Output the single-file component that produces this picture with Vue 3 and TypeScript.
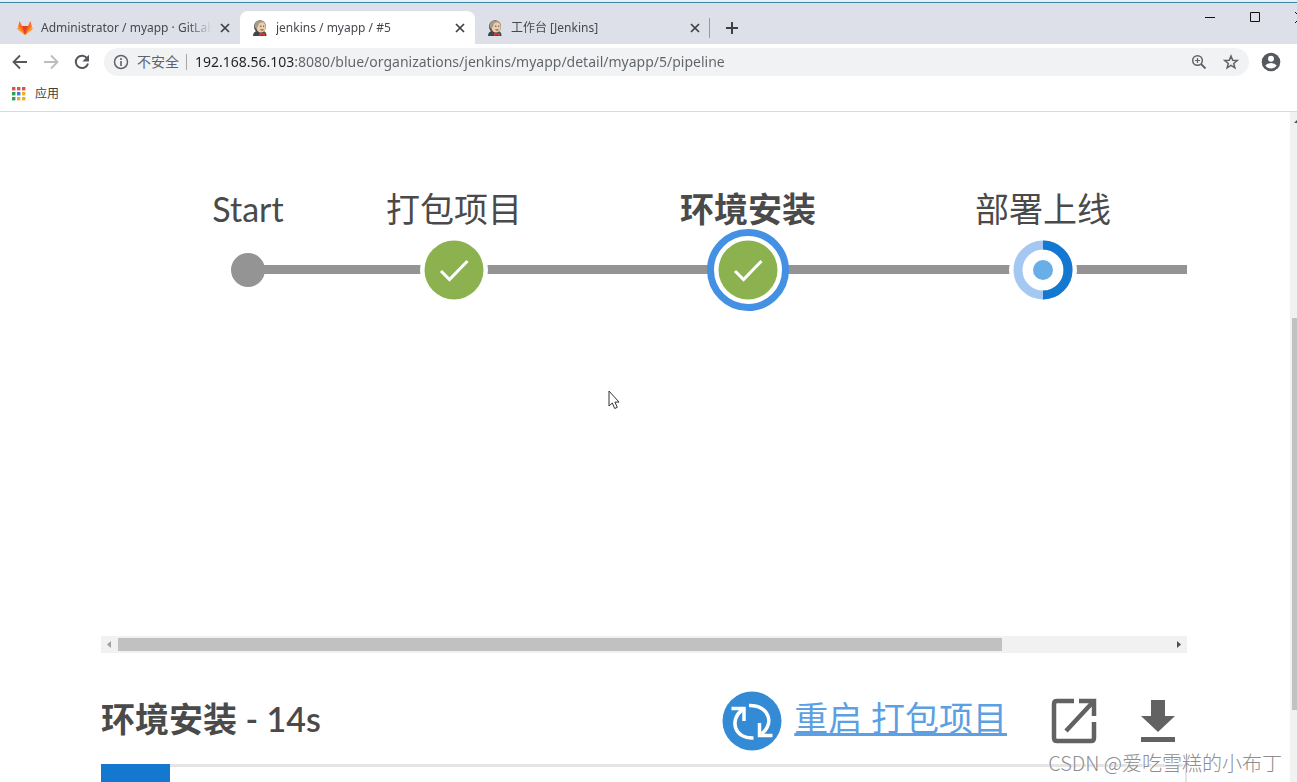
<script setup lang="ts">
import { ref } from 'vue'

interface BrowserTab {
  id: number
  title: string
  icon: 'gitlab' | 'jenkins'
}

interface Stage {
  name: string
  x: number
  state: 'start' | 'success' | 'running'
}

const tabs: BrowserTab[] = [
  { id: 1, title: 'Administrator / myapp · GitLab', icon: 'gitlab' },
  { id: 2, title: 'jenkins / myapp / #5', icon: 'jenkins' },
  { id: 3, title: '工作台 [Jenkins]', icon: 'jenkins' },
]
const activeTab = ref(2)

const address = ref('192.168.56.103:8080/blue/organizations/jenkins/myapp/detail/myapp/5/pipeline')

const stages: Stage[] = [
  { name: 'Start', x: 147, state: 'start' },
  { name: '打包项目', x: 353, state: 'success' },
  { name: '环境安装', x: 647, state: 'success' },
  { name: '部署上线', x: 942, state: 'running' },
]
const selected = ref('环境安装')

const appColors = ['#d9534a', '#d9534a', '#d9534a', '#2e9e5b', '#3b7de0', '#e8b02c', '#2e9e5b', '#e8b02c', '#e8b02c']
</script>

<template>
  <div class="window">
    <header class="chrome">
      <div class="frame-edge"></div>
      <div class="tab-strip">
        <div class="tabs" role="tablist">
          <div v-for="tab in tabs" :key="tab.id" class="tab" :class="{ active: tab.id === activeTab }">
            <button class="tab-main" role="tab" :aria-selected="tab.id === activeTab" @click="activeTab = tab.id">
              <svg v-if="tab.icon === 'gitlab'" class="favicon" viewBox="0 0 16 16" aria-hidden="true">
                <path d="M8 15 .5 9 2.600 1 5 6h6L13.400 1 15.500 9z" fill="#fc6d26" />
                <path d="M8 15 5 6h6z" fill="#e24329" />
                <path d="M8 15 .5 9l.8-3zM8 15l7.500-6-.8-3z" fill="#fca326" />
              </svg>
              <svg v-else class="favicon" viewBox="0 0 16 16" aria-hidden="true">
                <path d="M1 16c0-3 1.500-4.500 4-5h6c2.500.5 3.500 2 3.500 5z" fill="#3c4650" />
                <ellipse cx="8" cy="6.500" rx="6" ry="6.300" fill="#4a4542" />
                <ellipse cx="9" cy="6.800" rx="4.800" ry="5.800" fill="#edcdaa" />
                <path d="M2.500 6.500C2.500 2.500 5 .8 8 .8c3 0 4 1.200 4.500 2.200C10 2 7 2.500 6.500 5 6 7 5 8 4 9z" fill="#a79b8c" />
                <path d="M8 6.200h1.500M11 6.200h1.200M8.500 9.700q1.500.8 3 0" stroke="#59473c" fill="none" />
                <path d="m7 12.500 3 1 3-1V16l-3-1-3 1z" fill="#d33833" />
              </svg>
              <span class="tab-title">{{ tab.title }}</span>
            </button>
            <button class="icon-btn close" :aria-label="'关闭 ' + tab.title">
              <svg viewBox="0 0 10 10" width="10" height="10"><path d="m1 1 8 8M9 1 1 9" stroke="#3c4043" stroke-width="1.700" /></svg>
            </button>
          </div>
        </div>
        <button class="icon-btn new-tab" aria-label="新标签页">
          <svg viewBox="0 0 12 12" width="12" height="12"><path d="M6 0v12M0 6h12" stroke="#3c4043" stroke-width="2" /></svg>
        </button>
        <div class="window-controls">
          <button class="icon-btn" aria-label="最小化">
            <svg viewBox="0 0 11 11" width="11" height="11"><path d="M0 5.500h10" stroke="#111" /></svg>
          </button>
          <button class="icon-btn" aria-label="最大化">
            <svg viewBox="0 0 11 11" width="11" height="11"><path d="M.5.5h9v9h-9z" fill="none" stroke="#111" /></svg>
          </button>
          <button class="icon-btn" aria-label="关闭窗口">
            <svg viewBox="0 0 11 11" width="11" height="11"><path d="m0 0 11 11M11 0 0 11" stroke="#111" /></svg>
          </button>
        </div>
      </div>

      <div class="toolbar">
        <button class="icon-btn" aria-label="后退">
          <svg viewBox="0 0 16 16" width="16" height="16"><path d="M15 8H2M8 1.500 1.500 8 8 14.500" fill="none" stroke="#55585c" stroke-width="1.800" /></svg>
        </button>
        <button class="icon-btn" aria-label="前进" disabled>
          <svg viewBox="0 0 16 16" width="16" height="16"><path d="M1 8h13M8 1.500 14.500 8 8 14.500" fill="none" stroke="#babcbe" stroke-width="1.800" /></svg>
        </button>
        <button class="icon-btn" aria-label="重新加载">
          <svg viewBox="0 0 16 16" width="16" height="16"><path d="M13.400 4.800A6.200 6.200 0 1 0 14 9.500" fill="none" stroke="#55585c" stroke-width="2" /><path d="M15 .8v6.700H8.300z" fill="#55585c" /></svg>
        </button>
        <div class="omnibox">
          <svg viewBox="0 0 16 16" width="16" height="16" aria-hidden="true"><circle cx="8" cy="8" r="6.500" fill="none" stroke="#5f6368" stroke-width="1.500" /><path d="M8 7v5M8 4v2" stroke="#5f6368" stroke-width="1.600" /></svg>
          <label class="insecure" for="address">不安全</label>
          <input id="address" v-model="address" class="address" type="text" spellcheck="false" />
          <button class="icon-btn" aria-label="缩放">
            <svg viewBox="0 0 16 16" width="16" height="16"><circle cx="6.500" cy="6.500" r="4.800" fill="none" stroke="#5f6368" stroke-width="1.500" /><path d="M6.500 4v5M4 6.500h5" stroke="#5f6368" stroke-width="1.200" /><path d="m10 10 4.500 4.500" stroke="#5f6368" stroke-width="1.800" /></svg>
          </button>
          <button class="icon-btn" aria-label="收藏">
            <svg viewBox="0 0 16 16" width="16" height="16"><path d="m8 2 1.700 4.200 4.500.3-3.500 2.900 1.200 4.400L8 11.400l-3.900 2.400 1.200-4.400L1.800 6.500l4.500-.3z" fill="none" stroke="#5f6368" stroke-width="1.500" /></svg>
          </button>
        </div>
        <button class="icon-btn" aria-label="用户">
          <svg viewBox="0 0 20 20" width="20" height="20"><circle cx="10" cy="10" r="9.300" fill="#55585c" /><circle cx="10" cy="6.700" r="3" fill="#fff" /><path d="M4.300 13.500q1.700-2.500 5.700-2.500t5.700 2.500q-2 3-5.700 3t-5.700-3z" fill="#fff" /></svg>
        </button>
      </div>

      <nav class="bookmarks">
        <a class="apps" href="#">
          <svg viewBox="0 0 14 14" width="14" height="14" aria-hidden="true">
            <rect v-for="(color, i) in appColors" :key="i" :x="(i % 3) * 5" :y="Math.floor(i / 3) * 5" width="3.400" height="3.400" :fill="color" />
          </svg>
          <span>应用</span>
        </a>
      </nav>
    </header>

    <div class="viewport">
      <main class="page">
        <section class="graph" aria-label="Pipeline">
          <div class="track"></div>
          <template v-for="stage in stages" :key="stage.name">
            <div class="stage-label" :class="{ selected: stage.name === selected }" :style="{ left: stage.x + 'px' }">{{ stage.name }}</div>
            <button
              class="node"
              :class="[stage.state, { selected: stage.name === selected }]"
              :style="{ left: stage.x + 'px' }"
              :aria-label="stage.name"
              @click="selected = stage.name"
            >
              <svg v-if="stage.state === 'success'" viewBox="0 0 60 60" width="60" height="60">
                <circle cx="30" cy="30" r="29.500" fill="#8bb24f" />
                <path d="m17 31 8.500 8.500L43.500 21" fill="none" stroke="#fff" stroke-width="3" />
              </svg>
              <svg v-else-if="stage.state === 'running'" viewBox="0 0 60 60" width="60" height="60">
                <circle cx="30" cy="30" r="25" fill="#fff" stroke="#a5c8f2" stroke-width="9" />
                <path d="M30 5a25 25 0 0 1 0 50" fill="none" stroke="#1478d0" stroke-width="9" />
                <circle cx="30" cy="30" r="10" fill="#6aaee8" />
              </svg>
            </button>
          </template>
        </section>

        <div class="h-scroll" aria-hidden="true">
          <svg viewBox="0 0 17 17" width="17" height="17"><path d="M10 5v7L6 8.500z" fill="#a0a0a0" /></svg>
          <div class="h-rail"><div class="h-thumb"></div></div>
          <svg viewBox="0 0 17 17" width="17" height="17"><path d="M7 5v7l4-3.500z" fill="#505050" /></svg>
        </div>

        <section class="result">
          <h1 class="result-title">环境安装<span> - 14s</span></h1>
          <a class="restart" href="#">
            <svg viewBox="0 0 60 60" width="60" height="60" aria-hidden="true">
              <circle cx="30" cy="30" r="29.500" fill="#338ad5" />
              <g fill="none" stroke="#fff" stroke-width="3.500">
                <path d="M9.500 17.500H22V30" />
                <path d="M20.500 18.500C7 29 12 47.500 31.500 47" />
                <path d="M50.500 44.500H37.500V32" />
                <path d="M27 14.500C48 14 53 34 38.500 43.500" />
              </g>
            </svg>
            <span>重启 打包项目</span>
          </a>
          <button class="icon-btn" aria-label="在新窗口打开">
            <svg viewBox="0 0 46 46" width="46" height="46">
              <path d="M23 3H6Q3 3 3 6v34q0 3 3 3h34q3 0 3-3V24M28 3h15v15M42 4 15 33" fill="none" stroke="#626262" stroke-width="4.500" />
            </svg>
          </button>
          <button class="icon-btn" aria-label="下载">
            <svg viewBox="0 0 34 44" width="34" height="44">
              <path d="M10 1h14v16h10L17 33 0 17h10zM0 38h34v5H0z" fill="#626262" />
            </svg>
          </button>
        </section>

        <div class="steps"><div class="step-status"></div></div>
      </main>

      <div class="v-scroll" aria-hidden="true">
        <svg viewBox="0 0 7 17" width="7" height="17"><path d="M4 11 8 7v4z" fill="#505050" /></svg>
        <div class="v-rail"><div class="v-thumb"></div></div>
      </div>

      <svg class="pointer" viewBox="0 0 12 20" width="12" height="20" aria-hidden="true">
        <path d="M1 1v15l3.300-3 2.400 5.500 2.600-1.200-2.400-5.200H11z" fill="#fff" stroke="#333" />
      </svg>
      <div class="watermark">CSDN @爱吃雪糕的小布丁</div>
    </div>
  </div>
</template>

<style>
body {
  margin: 0;
}
</style>

<style scoped>
.window {
  position: relative;
  display: flex;
  flex-direction: column;
  height: 100vh;
  overflow: hidden;
  background: #fff;
  color: #4a4a4a;
  font-family: "Noto Sans", "Noto Sans CJK SC", sans-serif;
}

button {
  border: 0;
  padding: 0;
  background: none;
  font: inherit;
  color: inherit;
}

svg {
  display: block;
}

.icon-btn {
  display: flex;
  flex: none;
  align-items: center;
  justify-content: center;
}

.chrome {
  flex: none;
  border-bottom: 1px solid #d8dadc;
}

.frame-edge {
  height: 2px;
  background: #e2f0f8;
  border-bottom: 1px solid #3f86a5;
}

.tab-strip {
  display: flex;
  align-items: flex-end;
  height: 41px;
  background: #dde0e8;
}

.tabs {
  display: flex;
}

.tab {
  display: flex;
  align-items: center;
  box-sizing: border-box;
  width: 235px;
  height: 33px;
  padding: 0 10px 0 12px;
  border-radius: 8px 8px 0 0;
}

.tab:first-child {
  width: 240px;
  padding-left: 17px;
}

.tab:last-child {
  position: relative;
}

.tab:last-child::after {
  content: "";
  position: absolute;
  right: 0;
  top: 7px;
  width: 1px;
  height: 20px;
  background: #95989e;
}

.tab.active {
  background: #fff;
}

.tab-main {
  display: flex;
  flex: 1;
  align-items: center;
  gap: 8px;
  min-width: 0;
}

.favicon {
  flex: none;
  width: 16px;
  height: 16px;
}

.tab-title {
  flex: 1;
  overflow: hidden;
  font-size: 12px;
  line-height: 18px;
  text-align: left;
  white-space: nowrap;
  color: #45494e;
  mask-image: linear-gradient(90deg, #000 calc(100% - 24px), transparent);
}

.close {
  margin-left: 8px;
}

.new-tab {
  width: 43px;
  height: 33px;
}

.window-controls {
  display: flex;
  align-self: flex-start;
  gap: 34px;
  margin: 9px -9px 0 auto;
}

.toolbar {
  display: flex;
  align-items: center;
  gap: 15px;
  height: 36px;
  padding: 0 16px 0 12px;
}

.omnibox {
  display: flex;
  flex: 1;
  align-items: center;
  gap: 8px;
  height: 28px;
  padding: 0 10px 0 9px;
  border-radius: 14px;
  background: #f1f2f4;
}

.toolbar .omnibox {
  margin: 0 -3px 0 -1px;
}

.insecure {
  padding-right: 7px;
  border-right: 1px solid #a3a6aa;
  font-size: 14px;
  line-height: 16px;
  color: #5f6368;
}

.address {
  flex: 1;
  min-width: 0;
  border: 0;
  padding: 0;
  outline: 0;
  background: linear-gradient(90deg, #202124 99px, #5f6368 99px);
  background-clip: text;
  font: 14px/20px "Noto Sans", sans-serif;
  color: transparent;
}

.omnibox .icon-btn + .icon-btn {
  margin-left: 8px;
}

.bookmarks {
  display: flex;
  height: 31px;
  padding: 0 12px;
}

.apps {
  display: flex;
  align-items: center;
  height: 27px;
  gap: 9px;
  font-size: 12px;
  line-height: 18px;
  text-decoration: none;
  color: #3c4043;
}

.viewport {
  position: relative;
  display: flex;
  flex: 1;
  min-height: 0;
}

.page {
  display: flex;
  flex: 1;
  flex-direction: column;
  min-width: 0;
  padding: 0 103px 0 101px;
  font-family: Lato, "Noto Sans CJK SC", sans-serif;
}

.graph {
  position: relative;
  flex: none;
  height: 524px;
  overflow: hidden;
}

.track {
  position: absolute;
  left: 147px;
  right: 0;
  top: 153px;
  height: 9px;
  background: #949494;
}

.stage-label {
  position: absolute;
  top: 76px;
  transform: translateX(-50%);
  font-size: 34px;
  line-height: 42px;
  white-space: nowrap;
}

.stage-label.selected {
  font-weight: 700;
}

.node {
  position: absolute;
  top: 158px;
  transform: translate(-50%, -50%);
  border-radius: 50%;
  background: #fff;
}

.node.start {
  width: 34px;
  height: 34px;
  background: #949494;
}

.node.success,
.node.running {
  padding: 4px;
}

.node.selected {
  border: 7px solid #4490e2;
}

.h-scroll {
  display: flex;
  flex: none;
  height: 17px;
  background: #f1f1f1;
}

.h-rail {
  flex: 1;
  padding: 2px 0;
}

.h-thumb {
  width: 84%;
  height: 13px;
  background: #c1c1c1;
}

.result {
  display: flex;
  flex: none;
  align-items: center;
  padding: 38px 12px 13px 0;
}

.result-title {
  flex: 1;
  margin: 0;
  padding-bottom: 4px;
  font-size: 34px;
  line-height: 42px;
  font-weight: 700;
}

.result-title span {
  font-weight: 600;
  white-space: pre;
}

.restart {
  display: flex;
  align-items: center;
  gap: 12px;
  margin-right: 44px;
  font-size: 34px;
  line-height: 42px;
  color: #5c9fe2;
  text-decoration: none;
}

.restart span {
  padding-bottom: 6px;
  text-decoration: underline;
  text-decoration-thickness: 3px;
  text-decoration-skip-ink: none;
}

.result .icon-btn + .icon-btn {
  margin-left: 44px;
}

.steps {
  flex: 1;
  border-top: 3px solid #e4e4e4;
  border-right: 2px solid #e4e4e4;
}

.step-status {
  width: 69px;
  height: 48px;
  margin-top: -3px;
  background: #1478d0;
}

.v-scroll {
  display: flex;
  flex: none;
  flex-direction: column;
  width: 7px;
  background: #f1f1f1;
}

.v-rail {
  display: flex;
  flex: 1;
  flex-direction: column;
  padding: 189px 0 72px 2px;
}

.v-thumb {
  flex: 1;
  background: #c1c1c1;
}

.pointer {
  position: absolute;
  left: 608px;
  top: 278px;
}

.watermark {
  position: absolute;
  right: 15px;
  bottom: 6px;
  font-family: "Noto Sans CJK SC", sans-serif;
  font-weight: 300;
  font-size: 20px;
  line-height: 26px;
  color: #8e8e8e;
  text-shadow: -1px -1px 0 #fff;
}
</style>
